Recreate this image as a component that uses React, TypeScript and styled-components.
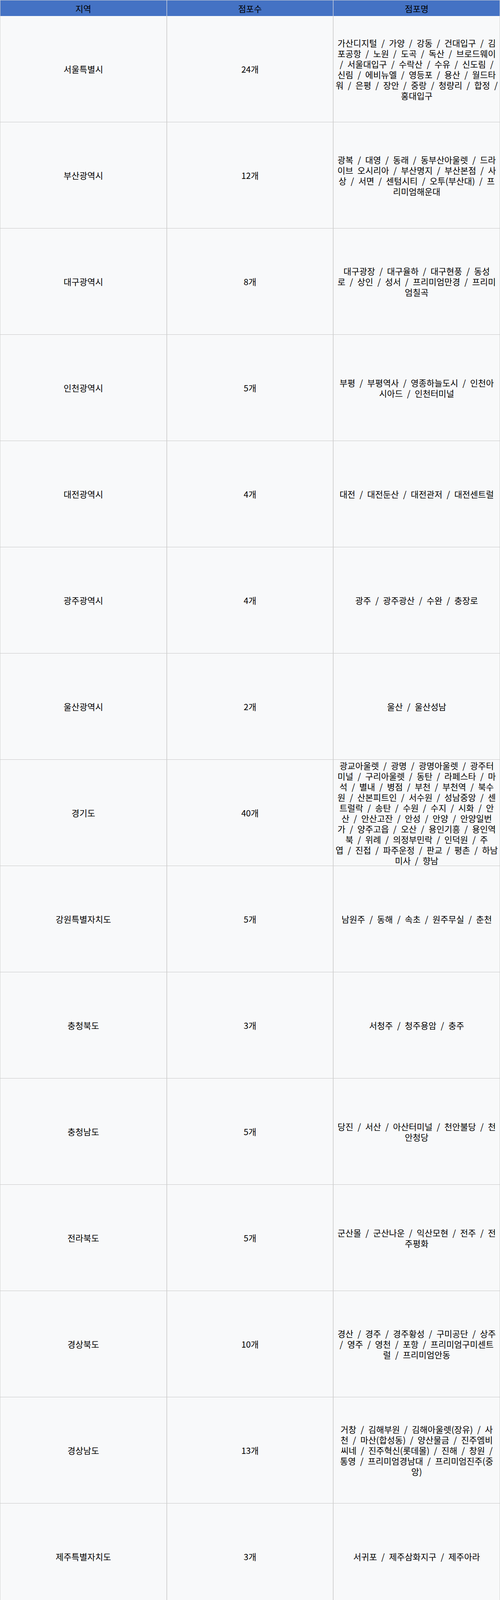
import React from "react";
import styled, { createGlobalStyle } from "styled-components";

const GlobalStyle = createGlobalStyle`
    html, body {
        margin: 0;
        padding: 0;
        background: #ffffff;
    }
    body {
        font-family: "Noto Sans CJK KR", "Noto Sans", sans-serif;
        color: #000000;
    }
`;

const Table = styled.div`
    width: 1280px;
    display: grid;
    grid-template-columns: repeat(3, 1fr);
    border-top: 1px solid #d4d4d4;
    font-size: 22px;
`;

const HeadCell = styled.div`
    height: 40px;
    display: flex;
    align-items: center;
    justify-content: center;
    background: #4472c4;
    color: #000000;
    border-left: 1px solid #a9b8d6;
    border-right: 1px solid #a9b8d6;
    &:first-child {
        border-left-color: #d4d4d4;
    }
    &:nth-child(3) {
        border-right-color: #d4d4d4;
    }
`;

const Cell = styled.div<{ $store?: boolean }>`
    height: 271px;
    box-sizing: content-box;
    display: flex;
    flex-direction: column;
    align-items: center;
    justify-content: center;
    padding: 0 ${(props) => (props.$store ? "4px" : "0")};
    background: #f8f9fa;
    text-align: center;
    border-left: 1px solid #d3d3d3;
    border-right: 1px solid #d3d3d3;
    border-bottom: 1px solid #c6c6c6;
    line-height: 27px;
    word-spacing: ${(props) => (props.$store ? "6px" : "0")};
`;

const Line = styled.span`
    display: block;
    white-space: nowrap;
`;

interface IStoreRow {
    region: string;
    count: string;
    lines: string[];
}

const rows: IStoreRow[] = [
    {
        region: "서울특별시",
        count: "24개",
        lines: [
            "가산디지털 / 가양 / 강동 / 건대입구 / 김",
            "포공항 / 노원 / 도곡 / 독산 / 브로드웨이",
            "/ 서울대입구 / 수락산 / 수유 / 신도림 /",
            "신림 / 에비뉴엘 / 영등포 / 용산 / 월드타",
            "워 / 은평 / 장안 / 중랑 / 청량리 / 합정 /",
            "홍대입구",
        ],
    },
    {
        region: "부산광역시",
        count: "12개",
        lines: [
            "광복 / 대영 / 동래 / 동부산아울렛 / 드라",
            "이브 오시리아 / 부산명지 / 부산본점 / 사",
            "상 / 서면 / 센텀시티 / 오투(부산대) / 프",
            "리미엄해운대",
        ],
    },
    {
        region: "대구광역시",
        count: "8개",
        lines: [
            "대구광장 / 대구율하 / 대구현풍 / 동성",
            "로 / 상인 / 성서 / 프리미엄만경 / 프리미",
            "엄칠곡",
        ],
    },
    {
        region: "인천광역시",
        count: "5개",
        lines: ["부평 / 부평역사 / 영종하늘도시 / 인천아", "시아드 / 인천터미널"],
    },
    { region: "대전광역시", count: "4개", lines: ["대전 / 대전둔산 / 대전관저 / 대전센트럴"] },
    { region: "광주광역시", count: "4개", lines: ["광주 / 광주광산 / 수완 / 충장로"] },
    { region: "울산광역시", count: "2개", lines: ["울산 / 울산성남"] },
    {
        region: "경기도",
        count: "40개",
        lines: [
            "광교아울렛 / 광명 / 광명아울렛 / 광주터",
            "미널 / 구리아울렛 / 동탄 / 라페스타 / 마",
            "석 / 별내 / 병점 / 부천 / 부천역 / 북수",
            "원 / 산본피트인 / 서수원 / 성남중앙 / 센",
            "트럴락 / 송탄 / 수원 / 수지 / 시화 / 안",
            "산 / 안산고잔 / 안성 / 안양 / 안양일번",
            "가 / 양주고읍 / 오산 / 용인기흥 / 용인역",
            "북 / 위례 / 의정부민락 / 인덕원 / 주",
            "엽 / 진접 / 파주운정 / 판교 / 평촌 / 하남",
            "미사 / 향남",
        ],
    },
    { region: "강원특별자치도", count: "5개", lines: ["남원주 / 동해 / 속초 / 원주무실 / 춘천"] },
    { region: "충청북도", count: "3개", lines: ["서청주 / 청주용암 / 충주"] },
    {
        region: "충청남도",
        count: "5개",
        lines: ["당진 / 서산 / 아산터미널 / 천안불당 / 천", "안청당"],
    },
    {
        region: "전라북도",
        count: "5개",
        lines: ["군산몰 / 군산나운 / 익산모현 / 전주 / 전", "주평화"],
    },
    {
        region: "경상북도",
        count: "10개",
        lines: [
            "경산 / 경주 / 경주황성 / 구미공단 / 상주",
            "/ 영주 / 영천 / 포항 / 프리미엄구미센트",
            "럴 / 프리미엄안동",
        ],
    },
    {
        region: "경상남도",
        count: "13개",
        lines: [
            "거창 / 김해부원 / 김해아울렛(장유) / 사",
            "천 / 마산(합성동) / 양산물금 / 진주엠비",
            "씨네 / 진주혁신(롯데몰) / 진해 / 창원 /",
            "통영 / 프리미엄경남대 / 프리미엄진주(중",
            "앙)",
        ],
    },
    { region: "제주특별자치도", count: "3개", lines: ["서귀포 / 제주삼화지구 / 제주아라"] },
];

function App() {
    return (
        <>
            <GlobalStyle />
            <Table>
                <HeadCell>지역</HeadCell>
                <HeadCell>점포수</HeadCell>
                <HeadCell>점포명</HeadCell>

                {rows.map((row) => (
                    <React.Fragment key={row.region}>
                        <Cell>{row.region}</Cell>
                        <Cell>{row.count}</Cell>
                        <Cell $store>
                            {row.lines.map((line, index) => (
                                <Line key={index}>{line}</Line>
                            ))}
                        </Cell>
                    </React.Fragment>
                ))}
            </Table>
        </>
    );
}

export default App;
